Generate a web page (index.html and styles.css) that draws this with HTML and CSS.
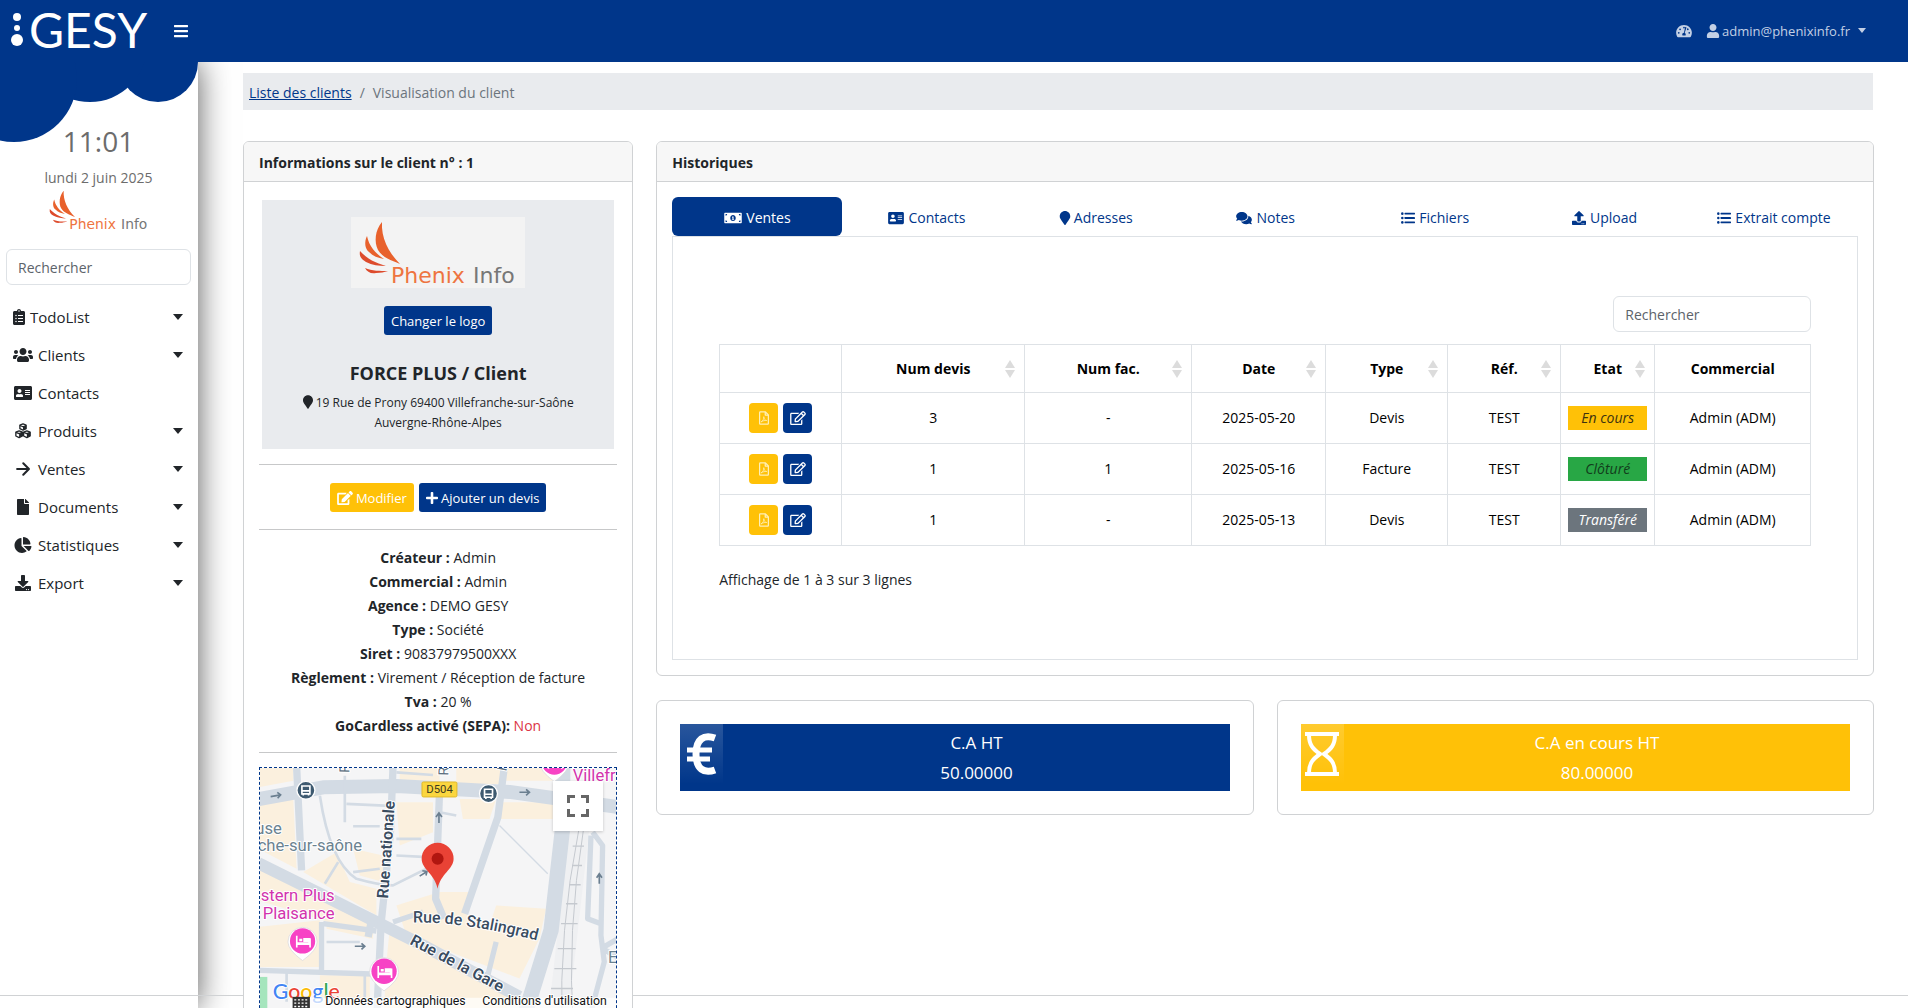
FILE: index.html
```html
<!DOCTYPE html>
<html lang="fr">
<head>
<meta charset="utf-8">
<meta name="viewport" content="width=device-width, initial-scale=1">
<title>GESY - Visualisation du client</title>
<link rel="stylesheet" href="styles.css">
</head>
<body>
<svg class="sprite" aria-hidden="true">
  <symbol id="i-bars" viewBox="0 0 448 512"><path d="M16 132h416c9 0 16-7 16-16V76c0-9-7-16-16-16H16C7 60 0 67 0 76v40c0 9 7 16 16 16zm0 160h416c9 0 16-7 16-16v-40c0-9-7-16-16-16H16c-9 0-16 7-16 16v40c0 9 7 16 16 16zm0 160h416c9 0 16-7 16-16v-40c0-9-7-16-16-16H16c-9 0-16 7-16 16v40c0 9 7 16 16 16z"/></symbol>
  <symbol id="i-dash" viewBox="0 0 576 512"><path fill-rule="evenodd" d="M288 32C129 32 0 161 0 320c0 53 14 102 39 145 6 10 16 15 28 15h442c12 0 22-5 28-15 25-43 39-92 39-145C576 161 447 32 288 32zM96 352a32 32 0 1 1 0-64 32 32 0 0 1 0 64zm48-128a32 32 0 1 1 0-64 32 32 0 0 1 0 64zm112-96a32 32 0 1 1 64 0 32 32 0 0 1-64 0zm224 224a32 32 0 1 1 0-64 32 32 0 0 1 0 64zm-48-128a32 32 0 1 1 10-60 32 32 0 0 1-10 60zM377 133l-62 186c23 11 37 35 37 65 0 12-3 23-9 32H233c-6-9-9-20-9-32 0-34 27-62 61-64l46-202c5-22 53-8 46 15z"/></symbol>
  <symbol id="i-user" viewBox="0 0 448 512"><path d="M224 256c70.700 0 128-57.300 128-128S294.700 0 224 0 96 57.300 96 128s57.300 128 128 128zm89.600 32h-16.700c-22.200 10.200-46.900 16-72.900 16s-50.600-5.800-72.900-16h-16.700C60.200 288 0 348.200 0 422.400V464c0 26.500 21.500 48 48 48h352c26.500 0 48-21.500 48-48v-41.600c0-74.200-60.200-134.400-134.400-134.400z"/></symbol>
  <symbol id="i-clip" viewBox="0 0 384 512"><path fill-rule="evenodd" d="M336 64h-80c0-35.300-28.700-64-64-64s-64 28.700-64 64H48C21.500 64 0 85.500 0 112v352c0 26.500 21.500 48 48 48h288c26.500 0 48-21.500 48-48V112c0-26.500-21.500-48-48-48zM96 424a24 24 0 1 1 0-48 24 24 0 0 1 0 48zm0-96a24 24 0 1 1 0-48 24 24 0 0 1 0 48zm0-96a24 24 0 1 1 0-48 24 24 0 0 1 0 48zm96-192a24 24 0 1 1 0 48 24 24 0 0 1 0-48zm128 376H160v-32h160zm0-96H160v-32h160zm0-96H160v-32h160z"/></symbol>
  <symbol id="i-users" viewBox="0 0 640 512"><path d="M96 224c35.300 0 64-28.700 64-64s-28.700-64-64-64-64 28.700-64 64 28.700 64 64 64zm448 0c35.300 0 64-28.700 64-64s-28.700-64-64-64-64 28.700-64 64 28.700 64 64 64zm32 32h-64c-17.600 0-33.500 7.100-45.100 18.600 40.300 22.100 68.900 62 75.100 109.400h66c17.700 0 32-14.300 32-32v-32c0-35.300-28.700-64-64-64zm-256 0c61.900 0 112-50.100 112-112S381.900 32 320 32 208 82.100 208 144s50.100 112 112 112zm76.800 32h-8.300c-20.800 10-43.900 16-68.500 16s-47.600-6-68.500-16h-8.300C179.600 288 128 339.600 128 403.200V432c0 26.500 21.500 48 48 48h288c26.500 0 48-21.500 48-48v-28.800c0-63.600-51.600-115.200-115.200-115.200zm-223.700-13.400C161.500 263.100 145.600 256 128 256H64c-35.300 0-64 28.700-64 64v32c0 17.700 14.300 32 32 32h65.900c6.300-47.400 34.900-87.300 75.200-109.400z"/></symbol>
  <symbol id="i-card" viewBox="0 0 576 512"><path fill-rule="evenodd" d="M528 32H48C21.500 32 0 53.500 0 80v352c0 26.500 21.500 48 48 48h480c26.500 0 48-21.500 48-48V80c0-26.500-21.500-48-48-48zm-352 96c35.300 0 64 28.700 64 64s-28.700 64-64 64-64-28.700-64-64 28.700-64 64-64zm112 236.800c0 10.600-10 19.200-22.400 19.200H86.400C74 384 64 375.400 64 364.800v-19.200c0-31.800 30.100-57.600 67.200-57.600h5c12.300 5.100 25.700 8 39.800 8s27.600-2.900 39.800-8h5c37.100 0 67.200 25.800 67.200 57.600v19.200zM512 320H352v-32h160zm0-64H352v-32h160zm0-64H352v-32h160z"/></symbol>
  <symbol id="i-cubes" viewBox="0 0 512 512"><g fill="none" stroke="currentColor" stroke-width="42" stroke-linejoin="round"><path d="M256 30l100 40v110l-100 45-100-45V70zM132 250l105 42v125l-105 50-105-50V292zM380 250l105 42v125l-105 50-105-50V292z"/><path d="M156 80l100 40 100-40M27 300l105 42 105-42M275 300l105 42 105-42"/></g><path d="M256 120l100-40v100l-100 45zM132 342l105-42v117l-105 50zM380 342l105-42v117l-105 50z"/></symbol>
  <symbol id="i-arrow" viewBox="0 0 448 512"><path fill="none" stroke="currentColor" stroke-width="66" stroke-linecap="round" stroke-linejoin="round" d="M36 256h370M232 74l182 182-182 182"/></symbol>
  <symbol id="i-file" viewBox="0 0 384 512"><path d="M224 136V0H24C10.700 0 0 10.700 0 24v464c0 13.300 10.700 24 24 24h336c13.300 0 24-10.700 24-24V160H248c-13.200 0-24-10.800-24-24zm160-14.100v6.100H256V0h6.100c6.400 0 12.500 2.500 17 7l97.900 98c4.500 4.500 7 10.600 7 16.900z"/></symbol>
  <symbol id="i-pie" viewBox="0 0 544 512"><path d="M527.790 288H290.500l158.030 158.030c6.040 6.040 15.980 6.530 22.190.68 38.700-36.460 65.320-85.610 73.130-140.860 1.340-9.460-6.510-17.850-16.060-17.850zm-15.830-64.800C503.720 103.740 408.260 8.280 288.800.04 279.680-.59 272 7.100 272 16.240V240h223.770c9.140 0 16.820-7.680 16.190-16.800zM224 288V50.710c0-9.550-8.390-17.400-17.840-16.060C86.990 51.490-4.100 155.600.14 280.370 4.500 408.510 114.830 513.590 243.030 511.980c50.400-.63 96.970-16.870 135.260-44.030 7.900-5.600 8.420-17.230 1.570-24.080L224 288z"/></symbol>
  <symbol id="i-down" viewBox="0 0 512 512"><path fill-rule="evenodd" d="M216 0h80c13.300 0 24 10.700 24 24v168h87.700c17.800 0 26.700 21.500 14.100 34.100L269.700 378.300c-7.500 7.500-19.800 7.500-27.300 0L90.100 226.100c-12.600-12.600-3.700-34.100 14.100-34.100H192V24c0-13.300 10.700-24 24-24zm296 376v112c0 13.300-10.700 24-24 24H24c-13.300 0-24-10.700-24-24V376c0-13.300 10.700-24 24-24h146.700l49 49c20.100 20.100 52.500 20.100 72.600 0l49-49H488c13.300 0 24 10.700 24 24zm-124 88a20 20 0 1 0-40 0 20 20 0 0 0 40 0zm64 0a20 20 0 1 0-40 0 20 20 0 0 0 40 0z"/></symbol>
  <symbol id="i-up" viewBox="0 0 512 512"><path fill-rule="evenodd" d="M296 384h-80c-13.300 0-24-10.700-24-24V192h-87.700c-17.800 0-26.700-21.500-14.100-34.100L242.300 5.700c7.500-7.500 19.800-7.500 27.300 0l152.200 152.200c12.600 12.600 3.700 34.100-14.100 34.100H320v168c0 13.300-10.700 24-24 24zm216-8v112c0 13.300-10.700 24-24 24H24c-13.300 0-24-10.700-24-24V376c0-13.300 10.700-24 24-24h136v8c0 30.900 25.100 56 56 56h80c30.900 0 56-25.100 56-56v-8h136c13.300 0 24 10.700 24 24zm-124 88a20 20 0 1 0-40 0 20 20 0 0 0 40 0zm64 0a20 20 0 1 0-40 0 20 20 0 0 0 40 0z"/></symbol>
  <symbol id="i-pin" viewBox="0 0 384 512"><path d="M172.268 501.670C26.970 291.031 0 269.413 0 192 0 85.961 85.961 0 192 0s192 85.961 192 192c0 77.413-26.970 99.031-172.268 309.670-9.535 13.774-29.930 13.773-39.464 0z"/></symbol>
  <symbol id="i-edit" viewBox="0 0 576 512"><path d="M402.600 83.200l90.200 90.200c3.800 3.800 3.800 10 0 13.800L274.400 405.600l-92.800 10.300c-12.400 1.400-22.900-9.100-21.500-21.500l10.300-92.800L388.800 83.200c3.800-3.800 10-3.800 13.800 0zm162-22.900l-48.800-48.800c-15.200-15.200-39.900-15.200-55.200 0l-35.400 35.400c-3.800 3.800-3.800 10 0 13.800l90.200 90.200c3.800 3.800 10 3.800 13.800 0l35.400-35.400c15.200-15.300 15.200-40 0-55.200zM384 346.200V448H64V128h229.800c3.200 0 6.200-1.300 8.500-3.500l40-40c7.600-7.600 2.200-20.500-8.500-20.500H48C21.500 64 0 85.500 0 112v352c0 26.500 21.500 48 48 48h352c26.500 0 48-21.500 48-48V306.200c0-10.700-12.900-16-20.500-8.500l-40 40c-2.200 2.300-3.500 5.300-3.500 8.500z"/></symbol>
  <symbol id="i-edit-o" viewBox="0 0 576 512"><path fill-rule="evenodd" d="M402.300 344.900l32-32c5-5 13.700-1.500 13.700 5.700V464c0 26.500-21.500 48-48 48H48c-26.500 0-48-21.500-48-48V112c0-26.500 21.500-48 48-48h273.500c7.100 0 10.700 8.600 5.700 13.700l-32 32c-1.500 1.500-3.500 2.300-5.700 2.300H48v352h352V350.500c0-2.100.8-4.100 2.300-5.600zm156.600-201.800L296.300 405.700l-90.400 10c-26.200 2.900-48.500-19.200-45.600-45.600l10-90.400L432.900 17.100c22.900-22.900 59.900-22.900 82.700 0l43.200 43.200c22.900 22.900 22.900 60 .1 82.800zM460.100 174L402 115.900 216.200 301.800l-7.300 65.300 65.300-7.300L460.100 174zm64.800-79.700l-43.200-43.200c-4.100-4.100-10.800-4.100-14.800 0L436 82l58.100 58.100 30.900-30.900c4-4.200 4-10.800-.1-14.900z"/></symbol>
  <symbol id="i-pdf" viewBox="0 0 384 512"><g fill="none" stroke="currentColor" stroke-width="48" stroke-linejoin="round"><path d="M24 48q0-24 24-24h200l112 112v328q0 24-24 24H48q-24 0-24-24z"/><path d="M240 30v114h114"/></g><path fill="none" stroke="currentColor" stroke-width="30" stroke-linecap="round" stroke-linejoin="round" d="M92 400c60-30 100-110 92-196 0 80 50 150 112 148-70-10-140 10-204 48z"/></symbol>
  <symbol id="i-plus" viewBox="0 0 448 512"><path d="M416 208H272V64c0-18-14-32-32-32h-32c-18 0-32 14-32 32v144H32c-18 0-32 14-32 32v32c0 18 14 32 32 32h144v144c0 18 14 32 32 32h32c18 0 32-14 32-32V304h144c18 0 32-14 32-32v-32c0-18-14-32-32-32z"/></symbol>
  <symbol id="i-bill" viewBox="0 0 640 512"><path fill-rule="evenodd" d="M24 64h592q24 0 24 24v336q0 24-24 24H24q-24 0-24-24V88q0-24 24-24zm24 48v60a60 60 0 0 0 60-60zm484 0a60 60 0 0 0 60 60v-60zM48 340v60h60a60 60 0 0 0-60-60zm544 0a60 60 0 0 0-60 60h60zM320 144c-60 0-100 50-100 112s40 112 100 112 100-50 100-112-40-112-100-112zm-20 56h40v88h20v32h-80v-32h20v-50h-16v-26z"/></symbol>
  <symbol id="i-comments" viewBox="0 0 576 512"><path d="M416 192c0-88.400-93.100-160-208-160S0 103.600 0 192c0 34.300 14.100 65.900 38 92-13.400 30.200-35.500 54.200-35.800 54.500-2.200 2.300-2.800 5.700-1.500 8.700S4.800 352 8 352c36.600 0 66.900-12.300 88.700-25 32.200 15.700 70.300 25 111.300 25 114.900 0 208-71.600 208-160zm122 220c23.900-26 38-57.700 38-92 0-66.900-53.500-124.200-129.300-148.100.9 6.600 1.300 13.300 1.300 20.100 0 105.900-107.700 192-240 192-10.800 0-21.300-.8-31.700-1.900C207.800 439.600 281.800 480 368 480c41 0 79.100-9.200 111.300-25 21.800 12.700 52.100 25 88.700 25 3.200 0 6.100-1.900 7.300-4.800 1.300-2.900.7-6.300-1.500-8.700-.3-.3-22.400-24.200-35.800-54.500z"/></symbol>
  <symbol id="i-list" viewBox="0 0 512 512"><circle cx="48" cy="96" r="46"/><circle cx="48" cy="256" r="46"/><circle cx="48" cy="416" r="46"/><rect x="128" y="62" width="384" height="66" rx="16"/><rect x="128" y="222" width="384" height="66" rx="16"/><rect x="128" y="382" width="384" height="66" rx="16"/></symbol>
  <symbol id="i-caret" viewBox="0 0 10 6"><path d="M0 0h10L5 6z"/></symbol>
  <symbol id="i-sort" viewBox="0 0 10 18"><path d="M5 0l5 8H0zM0 10h10l-5 8z"/></symbol>
  <symbol id="wing" viewBox="0 0 174 71">
    <g fill="#e8612c"><path d="M31 5c-7 8-8 20-4 28 5 8 13 10 22 14C37 35 30 20 31 5z"/><path d="M16 19c-3 6-2 13 2 16 4 4 9 6 15 7-9-6-15-13-17-23z"/><path fill="#dd4b2c" d="M9 34c-1 5 1 8 6 11 6 3 13 4 20 4-10-3-19-7-26-15z"/><path fill="#dd4b2c" d="M14 51c2 4 6 6 11 5 5 0 8-1 12-2-8 0-16 0-23-3z"/></g>
  </symbol>
</svg>

<header class="topbar">
  <a class="logo" href="#" aria-label="GESY">
    <svg width="150" height="62" viewBox="0 0 150 62" fill="#fff"><circle cx="17" cy="17" r="4"/><circle cx="17" cy="28" r="3"/><circle cx="17" cy="40" r="6"/><text class="logo-text" x="29" y="48">GESY</text></svg>
  </a>
  <button class="burger" type="button" aria-label="Menu"><svg class="ico w14"><use href="#i-bars"/></svg></button>
  <nav class="topnav">
    <a href="#" aria-label="Tableau de bord"><svg class="ico w16"><use href="#i-dash"/></svg></a>
    <a href="#"><svg class="ico w14"><use href="#i-user"/></svg><span>admin@phenixinfo.fr</span><svg class="mini"><use href="#i-caret"/></svg></a>
  </nav>
</header>

<div class="shell">
  <aside class="sidebar">
    <svg class="cloud" width="198" height="82" viewBox="0 62 198 82"><circle cx="158" cy="62" r="40"/><circle cx="90" cy="45" r="57"/><circle cx="14" cy="79" r="63"/></svg>
    <div class="clock">11:01</div>
    <div class="date">lundi 2 juin 2025</div>
    <svg width="100" height="41" viewBox="8 4 158 65"><use href="#wing" width="174" height="71"/><text class="brand-a" x="40" y="66">Phenix</text><text class="brand-b" x="122" y="66">Info</text></svg>
    <input class="field" type="search" placeholder="Rechercher" aria-label="Rechercher dans le menu">
    <nav class="menu">
      <a href="#"><svg class="ico w12"><use href="#i-clip"/></svg>TodoList<svg class="caret"><use href="#i-caret"/></svg></a>
      <a href="#"><svg class="ico w20"><use href="#i-users"/></svg>Clients<svg class="caret"><use href="#i-caret"/></svg></a>
      <a href="#"><svg class="ico w20"><use href="#i-card"/></svg>Contacts</a>
      <a href="#"><svg class="ico w20"><use href="#i-cubes"/></svg>Produits<svg class="caret"><use href="#i-caret"/></svg></a>
      <a href="#"><svg class="ico w20"><use href="#i-arrow"/></svg>Ventes<svg class="caret"><use href="#i-caret"/></svg></a>
      <a href="#"><svg class="ico w20"><use href="#i-file"/></svg>Documents<svg class="caret"><use href="#i-caret"/></svg></a>
      <a href="#"><svg class="ico w20"><use href="#i-pie"/></svg>Statistiques<svg class="caret"><use href="#i-caret"/></svg></a>
      <a href="#"><svg class="ico w20"><use href="#i-down"/></svg>Export<svg class="caret"><use href="#i-caret"/></svg></a>
    </nav>
  </aside>

  <main class="content">
    <nav class="crumbs" aria-label="Fil d'Ariane"><a href="#">Liste des clients</a><span>/</span><span>Visualisation du client</span></nav>

    <div class="grid">
      <section class="card col-info">
        <h2 class="card-head">Informations sur le client n° : 1</h2>
        <div class="card-body">
          <div class="hero">
            <svg class="client-logo" width="174" height="71" viewBox="0 0 174 71"><use href="#wing" width="174" height="71"/><text class="brand-a" x="40" y="66">Phenix</text><text class="brand-b" x="122" y="66">Info</text></svg>
            <button class="btn blue" type="button">Changer le logo</button>
            <h3>FORCE PLUS / Client</h3>
            <address><svg class="ico w10"><use href="#i-pin"/></svg> 19 Rue de Prony 69400 Villefranche-sur-Saône<br>Auvergne-Rhône-Alpes</address>
          </div>
          <hr>
          <div class="actions">
            <button class="btn yellow" type="button"><svg class="ico w16"><use href="#i-edit"/></svg>Modifier</button>
            <button class="btn blue" type="button"><svg class="ico w12"><use href="#i-plus"/></svg>Ajouter un devis</button>
          </div>
          <hr>
          <ul class="facts">
            <li><b>Créateur :</b> Admin</li>
            <li><b>Commercial :</b> Admin</li>
            <li><b>Agence :</b> DEMO GESY</li>
            <li><b>Type :</b> Société</li>
            <li><b>Siret :</b> 90837979500XXX</li>
            <li><b>Règlement :</b> Virement / Réception de facture</li>
            <li><b>Tva :</b> 20 %</li>
            <li><b>GoCardless activé (SEPA):</b> <span class="no">Non</span></li>
          </ul>
          <hr>
          <div class="map">
            <svg viewBox="60 57 1071 780" role="img" aria-label="Plan du quartier">
              <rect x="55" y="50" width="1090" height="800" fill="#f5f5f6"/>
              <g fill="#fbf0de">
                <path d="M55 160l105-10 10 210-115-60zM55 50h105v45L55 115zM55 330l335 185v55L250 515l-195-60zM190 370l100-60 40 90 80 20v80zM340 300l90 20v80l-70-20z"/>
                <path d="M480 50h120v45H480zM650 50h140v55H650zM660 150h110l-20 60h-80zM790 160h150v50H780zM55 535l185-20v140H55zM260 520h140v50l-140-30zM240 680h150v80H240z"/>
                <path d="M470 470l130-40h100l-20 80 220 60-60 120-340-130zM770 470l150 10-20 90-150-40zM450 540l350 180v120H430l10-200zM800 50h140v45H800z"/>
                <path d="M470 160h110v90l-100 40z"/>
              </g>
              <path fill="#a5e5bd" d="M55 685h27v170H55z"/>
              <path fill="#eff0f2" d="M990 240h60l-70 620h-60z"/>
              <g fill="none" stroke="#d3dbe4" stroke-linejoin="round">
                <path stroke-width="42" d="M55 151l195-36 220-4 340 18 330 46"/>
                <path stroke-width="46" d="M970 50v185l-35 310-90 290"/>
                <path stroke-width="36" d="M55 343l185 92 180 90 120 60 300 160"/>
                <path stroke-width="22" d="M460 50l-8 205-28 270-15 320M170 50l15 315M395 515l-10 50M600 120l-12 330 25 60M795 50l-20 155-100 290"/>
                <path stroke-width="16" d="M55 665l365 12M245 520v150M250 525l160 22M460 520l90-30M770 580l-30 120M1060 250l30 40-5 270 10 80-40 150M1055 260l-10 250 40 15M1085 600l60-35M1090 600l50 30"/>
                <path stroke-width="8" d="M240 140q30 200 110 250 70 20 110 20l120-60M315 80v140M320 165l130 6M340 232h80M470 270h75M470 320l80 4M340 370l80-10M255 405l40-65M600 190l50 10M470 70l110 8M375 680v80M260 580h100M140 670v90"/>
                <path stroke-width="4" d="M780 230l145 145"/>
              </g>
              <g fill="none" stroke="#c5c9cf" stroke-width="3"><path d="M1018 245q-60 300-50 600M1032 245q-50 300-30 600"/><path stroke-width="4" d="M1000 292h34M998 350h30M990 408h34M980 465h34M965 525h50M955 600h54M945 660h66M935 720h66"/></g>
              <g fill="none" stroke="#6b7f90" stroke-width="5"><path d="M92 143l30-5m-10-8l10 8-9 10M840 130h30m-10-9l10 9-10 9M598 222v-30m-9 12l9-12 9 12M540 382l22-14m-14-2l14 2-3 12M345 593h30m-10-9l10 9-10 9M1080 405v-28m-8 10l8-12 8 12"/></g>
              <g class="m-road"><text transform="translate(328 72) rotate(-88)">R</text><text transform="translate(626 80) rotate(-88)">R</text><text transform="translate(800 68) rotate(-78)">R</text></g>
              <g class="m-street"><text transform="translate(445 450) rotate(-86)">Rue nationale</text><text transform="translate(508 585) rotate(28)">Rue de la Gare</text></g>
              <g class="m-street soft"><path id="stal" fill="none" stroke="none" d="M520 522q150-5 400 60"/><text><textPath href="#stal">Rue de Stalingrad</textPath></text></g>
              <g class="m-place"><text x="46" y="256">use</text><text x="53" y="308">che-sur-saône</text><text x="1106" y="642">E</text></g>
              <g class="m-hotel"><text x="62" y="458">stern Plus</text><text x="68" y="511">Plaisance</text><text x="1000" y="95">Villefr</text></g>
              <rect x="547" y="99" width="105" height="45" rx="4" fill="#fbd63f" stroke="#e0b92c" stroke-width="3"/><text class="m-num" x="560" y="133">D504</text>
              <g id="bus"><circle cx="198" cy="124" r="27" fill="#3e5a70" stroke="#fff" stroke-width="4"/><path fill="none" stroke="#fff" stroke-width="5" d="M186 111h24v24h-24zM186 126h24M190 136v4M206 136v4"/></g>
              <use href="#bus" x="549" y="10"/>
              <g id="hotel"><path fill="#fff" stroke="#d5d5da" stroke-width="2" d="M188 536a44 44 0 0 1 44 44q0 24-44 56-44-32-44-56a44 44 0 0 1 44-44z"/><circle cx="188" cy="577" r="38" fill="#f743c5"/><path fill="#fff" d="M168 561h5v20h32v-12h8v28h-5v-8h-35v8h-5zM178 570h9v8h-9zM190 568h20v12h-20z"/></g>
              <use href="#hotel" x="245" y="91"/>
              <use href="#hotel" x="757" y="-538"/>
              <path fill="#e94235" d="M594 282a48 48 0 0 1 48 48c0 32-40 46-48 90-8-44-48-58-48-90a48 48 0 0 1 48-48z"/><circle cx="594" cy="330" r="18" fill="#b11610"/>
              <text class="m-google" x="98" y="752"><tspan fill="#4285f4">G</tspan><tspan fill="#ea4335">o</tspan><tspan fill="#fbbc05">o</tspan><tspan fill="#4285f4">g</tspan><tspan fill="#34a853">l</tspan><tspan fill="#ea4335">e</tspan></text>
              <path fill="#fff" opacity=".7" d="M150 748h990v80H150z"/>
              <path fill="#333" d="M158 745h52v38h-52z"/><path stroke="#fff" stroke-width="4" stroke-dasharray="6 5" d="M163 754h44M163 764h44M163 774h44"/>
              <g class="m-legal"><text x="256" y="770">Données cartographiques</text><text x="728" y="770">Conditions d'utilisation</text></g>
            </svg>
            <button class="full" type="button" aria-label="Plein écran"><svg width="22" height="22" viewBox="0 0 22 22"><path fill="none" stroke="#666" stroke-width="3" d="M1.500 8V1.500H8M14 1.500h6.500V8M20.500 14v6.500H14M8 20.500H1.500V14"/></svg></button>
          </div>
        </div>
      </section>

      <div class="col-main">
        <section class="card">
          <h2 class="card-head">Historiques</h2>
          <div class="card-body">
            <nav class="tabs">
              <a class="on" href="#"><svg class="ico w20"><use href="#i-bill"/></svg>Ventes</a>
              <a href="#"><svg class="ico w18"><use href="#i-card"/></svg>Contacts</a>
              <a href="#"><svg class="ico w12"><use href="#i-pin"/></svg>Adresses</a>
              <a href="#"><svg class="ico w18"><use href="#i-comments"/></svg>Notes</a>
              <a href="#"><svg class="ico w16"><use href="#i-list"/></svg>Fichiers</a>
              <a href="#"><svg class="ico w16"><use href="#i-up"/></svg>Upload</a>
              <a href="#"><svg class="ico w16"><use href="#i-list"/></svg>Extrait compte</a>
            </nav>
            <div class="pane">
              <input class="field" type="search" placeholder="Rechercher" aria-label="Rechercher une vente">
              <table>
                <colgroup><col class="c1"><col class="c2"><col class="c3"><col class="c4"><col class="c5"><col class="c6"><col class="c7"><col class="c8"></colgroup>
                <thead><tr>
                  <th></th>
                  <th>Num devis<svg class="sort"><use href="#i-sort"/></svg></th>
                  <th>Num fac.<svg class="sort"><use href="#i-sort"/></svg></th>
                  <th>Date<svg class="sort"><use href="#i-sort"/></svg></th>
                  <th>Type<svg class="sort"><use href="#i-sort"/></svg></th>
                  <th>Réf.<svg class="sort"><use href="#i-sort"/></svg></th>
                  <th>Etat<svg class="sort"><use href="#i-sort"/></svg></th>
                  <th>Commercial</th>
                </tr></thead>
                <tbody>
                  <tr><td><div class="pair"><button class="sq yellow" type="button" aria-label="PDF"><svg class="ico w10"><use href="#i-pdf"/></svg></button><button class="sq blue" type="button" aria-label="Modifier"><svg class="ico w16"><use href="#i-edit-o"/></svg></button></div></td><td>3</td><td>-</td><td>2025-05-20</td><td>Devis</td><td>TEST</td><td class="state"><em class="s-open">En cours</em></td><td>Admin (ADM)</td></tr>
                  <tr><td><div class="pair"><button class="sq yellow" type="button" aria-label="PDF"><svg class="ico w10"><use href="#i-pdf"/></svg></button><button class="sq blue" type="button" aria-label="Modifier"><svg class="ico w16"><use href="#i-edit-o"/></svg></button></div></td><td>1</td><td>1</td><td>2025-05-16</td><td>Facture</td><td>TEST</td><td class="state"><em class="s-done">Clôturé</em></td><td>Admin (ADM)</td></tr>
                  <tr><td><div class="pair"><button class="sq yellow" type="button" aria-label="PDF"><svg class="ico w10"><use href="#i-pdf"/></svg></button><button class="sq blue" type="button" aria-label="Modifier"><svg class="ico w16"><use href="#i-edit-o"/></svg></button></div></td><td>1</td><td>-</td><td>2025-05-13</td><td>Devis</td><td>TEST</td><td class="state"><em class="s-moved">Transféré</em></td><td>Admin (ADM)</td></tr>
                </tbody>
              </table>
              <p class="count">Affichage de 1 à 3 sur 3 lignes</p>
            </div>
          </div>
        </section>

        <div class="totals">
          <section class="card total"><div class="band blue">
            <span class="tile"><svg width="30" height="42" viewBox="0 0 30 42"><path fill="none" stroke="#fff" stroke-width="7" d="M28 5C17 1 9 6 9 21s8 20 19 16"/><path fill="none" stroke="#fff" stroke-width="5" d="M0 17h25M0 26h23"/></svg></span>
            <p>C.A HT<br>50.00000</p></div></section>
          <section class="card total"><div class="band yellow">
            <span class="tile"><svg width="34" height="46" viewBox="0 0 34 46"><path fill="none" stroke="#fff" stroke-width="4" d="M0 3h34M0 43h34M4 4c0 10 4 14 11 19C8 28 4 32 4 42M30 4c0 10-4 14-11 19 7 5 11 9 11 19"/></svg></span>
            <p>C.A en cours HT<br>80.00000</p></div></section>
        </div>
      </div>
    </div>
  </main>
</div>
<footer class="foot"></footer>
</body>
</html>
```
FILE: styles.css
```css
* { box-sizing: border-box; }
body {
  margin: 0; height: 100vh; overflow: hidden;
  display: flex; flex-direction: column;
  font: 14px/24px "Open Sans", "Noto Sans", sans-serif;
  color: #212529; background: #fff;
}
a { color: inherit; text-decoration: none; }
h2, h3, p, ul { margin: 0; padding: 0; }
button { font: inherit; border: 0; margin: 0; cursor: pointer; }
svg { fill: currentColor; }
.sprite { position: absolute; width: 0; height: 0; }

.ico { height: 16px; flex: none; }
.w10 { width: 10px; }
.w12 { width: 12px; }
.w14 { width: 14px; }
.w16 { width: 16px; }
.w18 { width: 18px; }
.w20 { width: 20px; }
.blue { background: #00368a; color: #fff; }
.yellow { background: #ffc107; color: #fff; }

/* Top bar */
.topbar {
  flex: none; height: 62px; padding-bottom: 1px; display: flex; align-items: center;
  background: #00368a; color: #fff; position: relative; z-index: 3;
}
.logo { display: block; height: 62px; }
.logo-text { font: 48px Lato, sans-serif; }
.burger { display: flex; align-items: center; background: none; color: #fff; padding: 0; margin-left: 24px; }
.topnav { margin-left: auto; padding-right: 42px; display: flex; gap: 14px; color: #c3d0e5; font-size: 13px; }
.topnav a { display: flex; align-items: center; gap: 2px; }
.topnav .ico { height: 14px; }
.mini { width: 8px; height: 5px; margin-left: 6px; }

/* Sidebar */
.shell { flex: 1; min-height: 0; display: flex; }
.sidebar {
  flex: none; width: 198px; padding: 62px 7px 0 6px; position: relative;
  background: #fff; box-shadow: 0 0 30px rgba(0, 0, 0, .65);
  display: flex; flex-direction: column; align-items: center;
}
.cloud { position: absolute; top: 0; left: 0; fill: #00368a; }
.clock { font-size: 28px; line-height: 34px; color: #6c6c6c; position: relative; }
.date { margin-top: 8px; color: #6c6c6c; }
.brand-a, .brand-b { font: 22px "DejaVu Sans", sans-serif; }
.brand-a { fill: #ee7440; }
.brand-b { fill: #777; }
.field {
  width: 100%; height: 36px; padding: 0 11px; font: inherit; color: #212529;
  background: #fff; border: 1px solid #dee2e6; border-radius: 6px;
}
.field::placeholder { color: #5c636a; opacity: 1; }
.sidebar .field { margin-top: 18px; }
.menu { width: 100%; margin-top: 13px; font-size: 15px; }
.menu a { display: flex; align-items: center; gap: 5px; height: 38px; padding: 0 8px 0 7px; }
.caret { width: 10px; height: 6px; margin-left: auto; }

/* Content */
.content { flex: 1; min-width: 0; padding: 11px 35px 0 45px; }
.crumbs { display: flex; align-items: center; gap: 8px; height: 37px; padding: 2px 6px 0; background: #e9ebee; color: #6c757d; }
.crumbs a { color: #00368a; text-decoration: underline; }
.grid { display: grid; grid-template-columns: repeat(12, minmax(0, 1fr)); gap: 23px; margin-top: 31px; align-items: start; }
.col-info { grid-column: span 3; }
.col-main { grid-column: span 9; display: grid; gap: 24px; }
.col-info, .col-main { position: relative; z-index: 2; min-width: 0; }
.card { background: #fff; border: 1px solid #d0d2d4; border-radius: 6px; }
.card-head { font-size: 14px; line-height: 23px; font-weight: 700; padding: 9px 15px 7px; background: #f7f7f7; border-bottom: 1px solid #d0d2d4; border-radius: 5px 5px 0 0; }
.card-body { padding: 15px; }
hr { margin: 15px 0; border: 0; border-top: 1px solid #c7c8c9; }

.hero { margin: 3px 3px 0; padding: 17px 10px 16px; background: #e9ebee; display: flex; flex-direction: column; align-items: center; text-align: center; }
.client-logo { background: #f3f3f3; }
.hero .btn { margin-top: 18px; }
.hero h3 { margin-top: 24px; font-size: 18px; line-height: 28px; }
.hero address { margin-top: 6px; font-size: 12px; line-height: 20px; font-style: normal; }
address .ico { height: 14px; vertical-align: -2px; }
.btn { display: inline-flex; align-items: center; justify-content: center; gap: 3px; height: 29px; padding: 0 7px; border-radius: 3px; font-size: 13px; line-height: 20px; }
.btn .ico { height: 14px; }
.actions { display: flex; justify-content: center; gap: 5px; padding: 3px 0 2px; }
.facts { list-style: none; text-align: center; padding-top: 1px; }
.facts + hr { margin: 14px 0; }
.no { color: #dc3545; }

/* Map */
.map { position: relative; border: 1px dashed #00368a; overflow: hidden; }
.map > svg { display: block; width: 100%; height: auto; }
.full { position: absolute; top: 13px; right: 13px; width: 50px; height: 50px; padding: 0; display: flex; align-items: center; justify-content: center; background: #fff; box-shadow: 0 1px 3px rgba(0, 0, 0, .2); }
.map text { font-family: Roboto, sans-serif; paint-order: stroke; stroke: #fff; stroke-width: 6px; stroke-linejoin: round; }
.m-road text { font-size: 42px; fill: #5d7080; }
.m-street text { font-size: 48px; font-weight: 600; fill: #3a4c5f; }
.m-street.soft text { font-weight: 500; }
.m-place text { font-size: 50px; fill: #6b8290; }
.m-hotel text { font-size: 50px; fill: #d233ad; }
.map .m-num { font-size: 34px; fill: #3c3a20; stroke: none; }
.map .m-google { font: 500 64px Lato, sans-serif; }
.m-legal text { font-size: 37px; fill: #111; }

/* History */
.tabs { display: flex; color: #00368a; }
.tabs a { flex: 1 1 0; display: flex; align-items: center; justify-content: center; gap: 3px; height: 39px; padding-top: 2px; border-radius: 6px; }
.tabs .ico { height: 14px; }
.tabs .on { background: #00368a; color: #fff; }
.pane { border: 1px solid #dee2e6; padding: 59px 46px 67px; }
.pane .field { display: block; width: 198px; margin: 0 0 12px auto; }
table { width: 100%; table-layout: fixed; border-collapse: collapse; text-align: center; color: #000; }
th, td { border: 1px solid #dee2e6; padding: 0; height: 51px; }
th { height: 48px; position: relative; }
.c1 { width: 122px; }
.c2 { width: 183px; }
.c3 { width: 167px; }
.c4 { width: 134px; }
.c5 { width: 122px; }
.c6 { width: 113px; }
.c7 { width: 94px; }
.c8 { width: 156px; }
.sort { position: absolute; top: 15px; right: 9px; width: 10px; height: 18px; color: #dcdcdc; }
.pair { display: flex; justify-content: center; gap: 5px; }
.sq { width: 29px; height: 30px; padding: 0; display: flex; align-items: center; justify-content: center; border-radius: 4px; }
.sq .ico { height: 14px; }
.sq.yellow { color: #fff0b8; }
.state { padding: 0 7px; }
.state em { display: block; height: 24px; }
.s-open { background: #ffc107; color: #3d3210; }
.s-done { background: #28a745; color: #123c1c; }
.s-moved { background: #6c757d; color: #fff; }
.count { margin-top: 22px; }

.totals { display: grid; grid-template-columns: 1fr 1fr; gap: 23px; }
.total { padding: 23px; }
.band { display: flex; height: 67px; font-size: 17px; line-height: 30px; text-align: center; }
.band p { flex: 1; padding-top: 4px; }
.tile { flex: none; width: 43px; height: 60px; display: flex; align-items: center; justify-content: center; background: linear-gradient(rgba(255, 255, 255, .16), rgba(255, 255, 255, 0)); }

/* The footer rule runs over the sidebar but under the cards */
.foot { position: fixed; left: 0; right: 0; bottom: 0; height: 13px; border-top: 1px solid #d0d2d4; z-index: 1; pointer-events: none; }
```
